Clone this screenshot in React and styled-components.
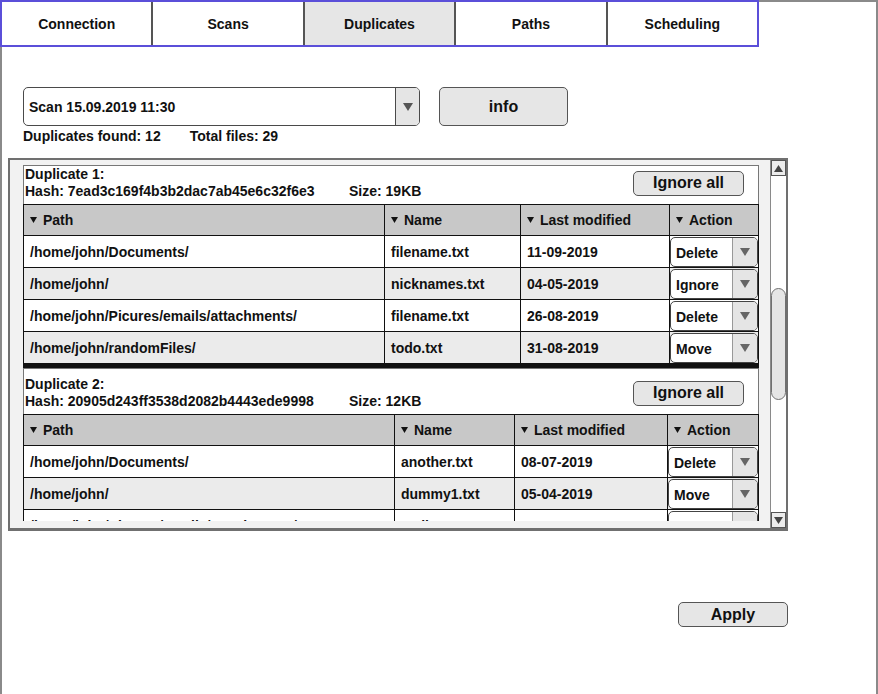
import React from "react";
import styled, { createGlobalStyle } from "styled-components";

const GlobalStyle = createGlobalStyle`
  body {
    margin: 0;
    font-family: "Liberation Sans", Arial, sans-serif;
    color: #111;
    background: #fff;
    overflow: hidden;
  }
`;

const Frame = styled.div`
  box-sizing: border-box;
  width: 878px;
  height: 694px;
  border: 2px solid #8a8a8a;
  border-bottom: none;
`;

const TabBar = styled.div`
  display: flex;
  box-sizing: border-box;
  width: 759px;
  height: 47px;
  margin: -2px 0 0 -2px;
  border: 2px solid #5b4fd9;
  background: #fff;
`;

const Tab = styled.div`
  flex: 1;
  display: flex;
  align-items: center;
  justify-content: center;
  font-size: 14px;
  font-weight: bold;
  background: ${props => (props.$active ? "#e6e6e6" : "#fff")};
  & + & {
    border-left: 2px solid #555;
  }
`;

const Content = styled.div`
  padding: 40px 0 0 6px;
`;

const TopRow = styled.div`
  display: flex;
  gap: 19px;
  margin-left: 15px;
  height: 39px;
`;

const ScanSelect = styled.div`
  display: flex;
  box-sizing: border-box;
  width: 397px;
  height: 39px;
  border: 1px solid #4a4a4a;
  border-radius: 5px;
  overflow: hidden;
`;

const SelectText = styled.div`
  flex: 1;
  display: flex;
  align-items: center;
  padding-left: 5px;
  font-size: 14px;
  font-weight: bold;
`;

const SelectArrow = styled.div`
  width: ${props => props.$w || 23}px;
  display: flex;
  align-items: center;
  justify-content: center;
  border-left: 1px solid ${props => props.$line || "#4a4a4a"};
  background: #e5e5e5;
`;

const Button = styled.button`
  box-sizing: border-box;
  width: ${props => props.$w}px;
  height: ${props => props.$h}px;
  padding: 0;
  font-family: inherit;
  font-size: 16px;
  font-weight: bold;
  color: #111;
  background: #e6e6e6;
  border: 1px solid #555;
  border-radius: 5px;
`;

const Stats = styled.div`
  display: flex;
  gap: 29px;
  margin: 2px 0 0 15px;
  font-size: 14px;
  font-weight: bold;
  line-height: 17px;
`;

const Panel = styled.div`
  display: flex;
  box-sizing: border-box;
  width: 780px;
  height: 373px;
  margin-top: 13px;
  border: 2px solid #707070;
  border-bottom-width: 3px;
  background: #f2f2f2;
`;

const Viewport = styled.div`
  flex: none;
  width: 736px;
  height: 356px;
  margin: 5px 11px 0 13px;
  overflow: hidden;
`;

const ScrollTrack = styled.div`
  flex: 1;
  display: flex;
  flex-direction: column;
  border-left: 1px solid #8a8a8a;
  background: #fff;
`;

const ScrollButton = styled.div`
  box-sizing: border-box;
  height: 16px;
  display: flex;
  align-items: center;
  justify-content: center;
  border: 1px solid #555;
  background: #ececec;
  margin-top: ${props => (props.$bottom ? "auto" : "0")};
`;

const Thumb = styled.div`
  box-sizing: border-box;
  height: 112px;
  margin: 112px 0 0;
  border: 1px solid #707070;
  border-radius: 8px;
  background: #e5e5e5;
`;

const CardHeader = styled.div`
  display: flex;
  align-items: center;
  justify-content: space-between;
  padding: ${props => props.$top}px 14px 4px 1px;
  border: 1px solid #777;
  border-bottom: none;
  background: #fff;
`;

const HeaderInfo = styled.div`
  font-size: 14px;
  font-weight: bold;
  line-height: 17px;
`;

const HashLine = styled.div`
  display: grid;
  grid-template-columns: 324px auto;
`;

const Table = styled.div`
  border: 1px solid #111;
  border-bottom-width: 4px;
  background: #fff;
`;

const Row = styled.div`
  display: grid;
  grid-template-columns: ${props => props.$cols};
  box-sizing: border-box;
  height: ${props => (props.$head ? 31 : 32)}px;
  border-bottom: 1px solid #111;
  background: ${props => props.$bg};
`;

const Cell = styled.div`
  display: flex;
  align-items: center;
  gap: 6px;
  padding: 0 6px;
  font-size: 14px;
  font-weight: bold;
  white-space: nowrap;
  overflow: hidden;
  & + & {
    border-left: 1px solid #111;
  }
`;

const ActionCell = styled(Cell)`
  padding: 0;
  align-items: stretch;
  overflow: visible;
`;

const ActionSelect = styled.div`
  flex: 1;
  display: flex;
  margin-top: 1px;
  border: 1px solid #444;
  border-radius: 5px;
  background: #fff;
  overflow: hidden;
`;

const ActionText = styled.div`
  flex: 1;
  display: flex;
  align-items: center;
  padding: 2px 0 0 5px;
`;

const ApplyRow = styled.div`
  display: flex;
  justify-content: flex-end;
  width: 780px;
  margin-top: 71px;
`;

const Triangle = ({ w = 9, h = 7, color = "#555", up }) => (
  <svg width={w} height={h} viewBox={`0 0 ${w} ${h}`}>
    <polygon
      points={up ? `0,${h} ${w},${h} ${w / 2},0` : `0,0 ${w},0 ${w / 2},${h}`}
      fill={color}
    />
  </svg>
);

const duplicates = [
  {
    title: "Duplicate 1:",
    hash: "7ead3c169f4b3b2dac7ab45e6c32f6e3",
    size: "19KB",
    top: 0,
    cols: "360px 136px 149px 1fr",
    rows: [
      ["/home/john/Documents/", "filename.txt", "11-09-2019", "Delete"],
      ["/home/john/", "nicknames.txt", "04-05-2019", "Ignore"],
      ["/home/john/Picures/emails/attachments/", "filename.txt", "26-08-2019", "Delete"],
      ["/home/john/randomFiles/", "todo.txt", "31-08-2019", "Move"]
    ]
  },
  {
    title: "Duplicate 2:",
    hash: "20905d243ff3538d2082b4443ede9998",
    size: "12KB",
    top: 7,
    cols: "370px 120px 153px 1fr",
    rows: [
      ["/home/john/Documents/", "another.txt", "08-07-2019", "Delete"],
      ["/home/john/", "dummy1.txt", "05-04-2019", "Move"],
      ["/home/john/Picures/emails/attachments/", "mail.txt", "30-08-2019", "Delete"]
    ]
  }
];

const headers = ["Path", "Name", "Last modified", "Action"];
const tabs = ["Connection", "Scans", "Duplicates", "Paths", "Scheduling"];

const DuplicateCard = ({ dup }) => (
  <div>
    <CardHeader $top={dup.top}>
      <HeaderInfo>
        <div>{dup.title}</div>
        <HashLine>
          <span>Hash: {dup.hash}</span>
          <span>Size: {dup.size}</span>
        </HashLine>
      </HeaderInfo>
      <Button $w={111} $h={25}>
        Ignore all
      </Button>
    </CardHeader>
    <Table>
      <Row $head $cols={dup.cols} $bg="#c8c8c8">
        {headers.map(h => (
          <Cell key={h}>
            <Triangle w={7} h={6} color="#111" />
            {h}
          </Cell>
        ))}
      </Row>
      {dup.rows.map((r, i) => (
        <Row key={i} $cols={dup.cols} $bg={i % 2 ? "#ebebeb" : "#fff"}>
          <Cell>{r[0]}</Cell>
          <Cell>{r[1]}</Cell>
          <Cell>{r[2]}</Cell>
          <ActionCell>
            <ActionSelect>
              <ActionText>{r[3]}</ActionText>
              <SelectArrow $w={24} $line="#999">
                <Triangle w={10} h={8} color="#666" />
              </SelectArrow>
            </ActionSelect>
          </ActionCell>
        </Row>
      ))}
    </Table>
  </div>
);

const App = () => {
  return (
    <>
      <GlobalStyle />
      <Frame>
        <TabBar>
          {tabs.map(t => (
            <Tab key={t} $active={t === "Duplicates"}>
              {t}
            </Tab>
          ))}
        </TabBar>
        <Content>
          <TopRow>
            <ScanSelect>
              <SelectText>Scan 15.09.2019 11:30</SelectText>
              <SelectArrow>
                <Triangle w={10} h={8} color="#555" />
              </SelectArrow>
            </ScanSelect>
            <Button $w={129} $h={39}>
              info
            </Button>
          </TopRow>
          <Stats>
            <span>Duplicates found: 12</span>
            <span>Total files: 29</span>
          </Stats>
          <Panel>
            <Viewport>
              {duplicates.map(d => (
                <DuplicateCard key={d.title} dup={d} />
              ))}
            </Viewport>
            <ScrollTrack>
              <ScrollButton>
                <Triangle w={9} h={7} color="#444" up />
              </ScrollButton>
              <Thumb />
              <ScrollButton $bottom>
                <Triangle w={9} h={7} color="#444" />
              </ScrollButton>
            </ScrollTrack>
          </Panel>
          <ApplyRow>
            <Button $w={110} $h={25}>
              Apply
            </Button>
          </ApplyRow>
        </Content>
      </Frame>
    </>
  );
};

export default App;
